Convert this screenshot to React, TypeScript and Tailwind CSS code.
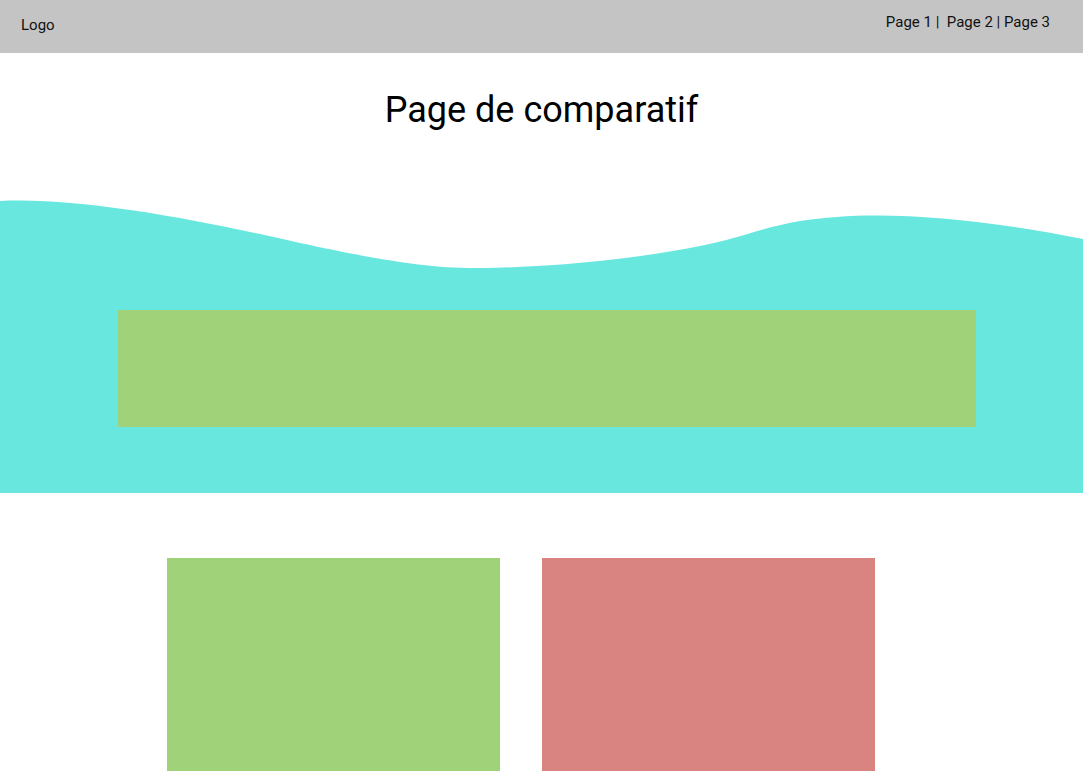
import React from "react";

export default function App() {
  return (
    <div className="w-full min-h-screen bg-white overflow-hidden" style={{ fontFamily: "Roboto, 'Noto Sans', sans-serif" }}>
      <header className="h-[53px] bg-[#c4c4c4] flex items-start justify-between pl-[21px] pr-[33px] text-[15px] text-[#111]">
        <div className="mt-[15px] leading-[20px]">Logo</div>
        <div className="mt-[12px] leading-[20px] whitespace-pre">Page 1 |  Page 2 | Page 3</div>
      </header>
      <h1 className="text-center text-[36px] leading-[43px] mt-[36px] text-black font-normal">Page de comparatif</h1>
      <section className="mt-[68px]">
        <svg className="block w-full h-[70px]" viewBox="0 0 1083 70" preserveAspectRatio="none">
          <path
            d="M0,1 C80,-3 200,20 300,43 C380,60 430,69 483,68 C560,67 640,58 700,46 C740,38 760,28 800,21 C870,10 960,15 1083,39 L1083,71 L0,71 Z"
            fill="#68e7df"
          />
        </svg>
        <div className="bg-[#68e7df] h-[223px] pt-[40px] pl-[118px]">
          <div className="w-[858px] h-[117px] bg-[#a0d379]" />
        </div>
      </section>
      <section className="mt-[65px] flex gap-[42px] pl-[167px]">
        <div className="w-[333px] h-[240px] bg-[#a0d379]" />
        <div className="w-[333px] h-[240px] bg-[#da8482]" />
      </section>
    </div>
  );
}
